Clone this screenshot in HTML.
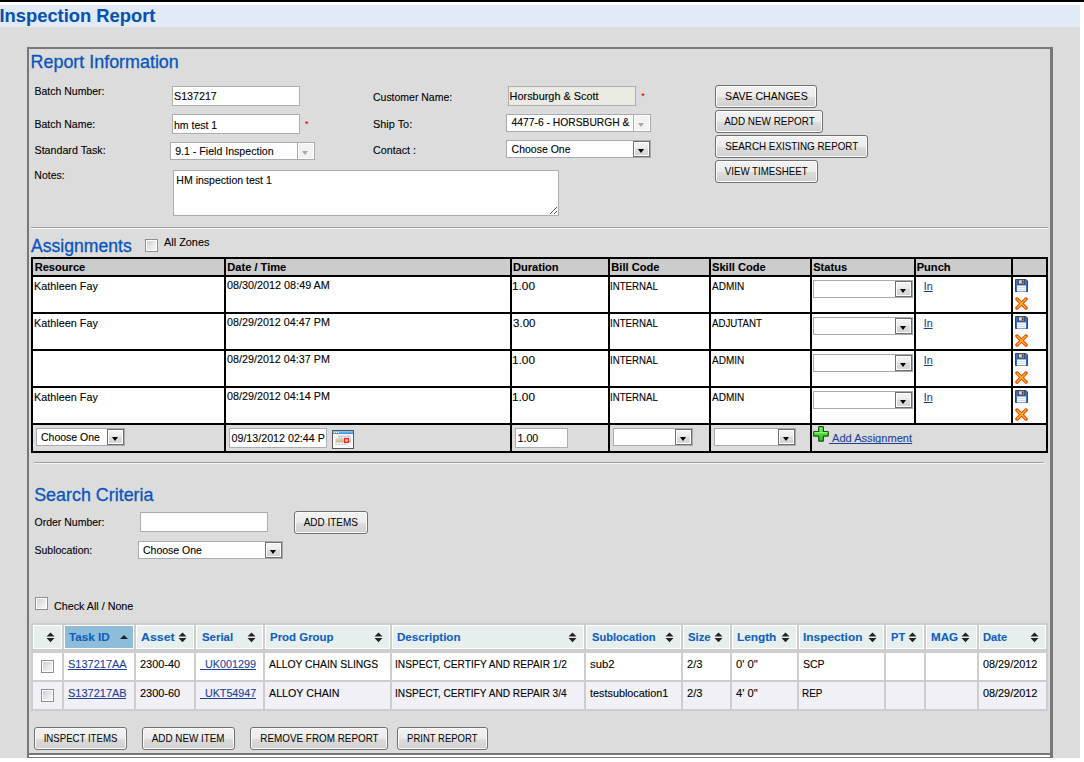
<!DOCTYPE html><html><head><meta charset="utf-8"><style>
html,body{margin:0;padding:0;}
body{width:1084px;height:762px;overflow:hidden;position:relative;background:#fff;font-family:"Liberation Sans",sans-serif;color:#000;}
.a{position:absolute;}
.t{position:absolute;white-space:pre;-webkit-text-stroke:0.1px currentColor;}
.btn{position:absolute;box-sizing:border-box;border:1px solid #707070;border-radius:3px;background:linear-gradient(#f2f2f2 0%,#ebebeb 50%,#dddddd 51%,#cfcfcf 100%);box-shadow:inset 0 0 0 1px #fcfcfc;display:flex;align-items:center;justify-content:center;color:#000;white-space:pre;}
.lnk{color:#1d3f9a;text-decoration:underline;}
.th{position:absolute;white-space:pre;font-weight:bold;}
</style></head><body>
<div class="a" style="left:0px;top:0px;width:1084px;height:2px;background:#000;"></div>
<div class="a" style="left:0px;top:5px;width:1080px;height:22px;background:#e3eaf7;"></div>
<div class="a" style="left:0px;top:27px;width:1080px;height:731px;background:#dcdcdc;"></div>
<div class="t" style="left:-0.50px;top:7.27px;font-size:18.35px;line-height:18.35px;font-weight:bold;color:#0553ac;">Inspection Report</div>
<div class="a" style="left:27px;top:47px;width:1026px;height:711px;border:2px solid #787878;border-right-width:3px;box-sizing:border-box;"></div>
<div class="a" style="left:29px;top:753px;width:1021px;height:2px;background:#787878;"></div>
<div class="a" style="left:29px;top:755px;width:1021px;height:2px;background:#fff;"></div>
<div class="t" style="left:30.60px;top:53.65px;font-size:17.9px;line-height:17.9px;color:#0855bd;-webkit-text-stroke:0.3px #0855bd;">Report Information</div>
<div class="t" style="left:34.50px;top:85.91px;font-size:10.5px;line-height:10.5px;">Batch Number:</div>
<div class="t" style="left:34.50px;top:118.81px;font-size:10.5px;line-height:10.5px;">Batch Name:</div>
<div class="t" style="left:34.50px;top:145.44px;font-size:10.7px;line-height:10.7px;">Standard Task:</div>
<div class="t" style="left:34.30px;top:169.91px;font-size:10.5px;line-height:10.5px;">Notes:</div>
<div class="a" style="left:172px;top:86px;width:128px;height:20px;border:1px solid #abadb3;background:#fff;box-sizing:border-box;"></div>
<div class="t" style="left:174.00px;top:90.84px;font-size:10.7px;line-height:10.7px;">S137217</div>
<div class="a" style="left:172px;top:114px;width:128px;height:20px;border:1px solid #abadb3;background:#fff;box-sizing:border-box;"></div>
<div class="t" style="left:174.00px;top:120.31px;font-size:10.5px;line-height:10.5px;">hm test 1</div>
<div class="t" style="left:305.00px;top:120.38px;font-size:9px;line-height:9px;color:#e00;">*</div>
<div class="a" style="left:170px;top:142px;width:145px;height:18px;border:1px solid #a7abb2;background:#fff;box-sizing:border-box;"></div>
<div class="a" style="left:297px;top:142px;width:18px;height:18px;border:1px solid #a9acb1;box-sizing:border-box;background:#f2f2f2;box-shadow:inset 0 0 0 1px #fff;"></div>
<div class="a" style="left:302.0px;top:150.5px;width:0;height:0;border-left:3.5px solid transparent;border-right:3.5px solid transparent;border-top:4px solid #a8a8a8"></div>
<div class="t" style="left:175.20px;top:145.53px;font-size:10.6px;line-height:10.6px;">9.1 - Field Inspection</div>
<div class="a" style="left:173px;top:170px;width:386px;height:46px;border:1px solid #abadb3;background:#fff;box-sizing:border-box;"></div>
<div class="t" style="left:176.30px;top:175.06px;font-size:10.56px;line-height:10.56px;">HM inspection test 1</div>
<svg class="a" style="left:548px;top:205px" width="10" height="10" fill="#555"><rect x="2" y="8" width="1" height="1"/><rect x="3" y="7" width="1" height="1"/><rect x="4" y="6" width="1" height="1"/><rect x="5" y="5" width="1" height="1"/><rect x="6" y="4" width="1" height="1"/><rect x="7" y="3" width="1" height="1"/><rect x="8" y="2" width="1" height="1"/><rect x="6" y="8" width="1" height="1"/><rect x="7" y="7" width="1" height="1"/><rect x="8" y="6" width="1" height="1"/></svg>
<div class="t" style="left:372.68px;top:91.71px;font-size:10.5px;line-height:10.5px;transform:scaleX(0.9973);transform-origin:0 0;">Customer Name:</div>
<div class="t" style="left:372.66px;top:118.71px;font-size:10.5px;line-height:10.5px;transform:scaleX(1.0380);transform-origin:0 0;">Ship To:</div>
<div class="t" style="left:372.66px;top:144.61px;font-size:10.5px;line-height:10.5px;transform:scaleX(1.0239);transform-origin:0 0;">Contact :</div>
<div class="a" style="left:508px;top:86px;width:128px;height:20px;border:1px solid #abadb3;background:#ebebe4;box-sizing:border-box;"></div>
<div class="t" style="left:509.60px;top:91.17px;font-size:10.9px;line-height:10.9px;">Horsburgh &amp; Scott</div>
<div class="t" style="left:641.30px;top:92.38px;font-size:9px;line-height:9px;color:#e00;">*</div>
<div class="a" style="left:506px;top:114px;width:145px;height:18px;border:1px solid #a7abb2;background:#fff;box-sizing:border-box;"></div>
<div class="a" style="left:633px;top:114px;width:18px;height:18px;border:1px solid #a9acb1;box-sizing:border-box;background:#f2f2f2;box-shadow:inset 0 0 0 1px #fff;"></div>
<div class="a" style="left:638.0px;top:122.5px;width:0;height:0;border-left:3.5px solid transparent;border-right:3.5px solid transparent;border-top:4px solid #a8a8a8"></div>
<div class="t" style="left:511.60px;top:117.88px;font-size:10.3px;line-height:10.3px;">4477-6 - HORSBURGH &amp;</div>
<div class="a" style="left:506px;top:140px;width:145px;height:18px;border:1px solid #a7abb2;background:#fff;box-sizing:border-box;"></div>
<div class="a" style="left:633px;top:141px;width:17px;height:16px;border:1px solid #6f6f6f;box-sizing:border-box;background:linear-gradient(#f4f4f4 0%,#ececec 45%,#dcdcdc 50%,#d4d4d4 100%);box-shadow:inset 0 0 0 1px #fff;"></div>
<div class="a" style="left:637.5px;top:149.0px;width:0;height:0;border-left:3.7px solid transparent;border-right:3.7px solid transparent;border-top:4.2px solid #000"></div>
<div class="t" style="left:511.60px;top:143.61px;font-size:10.5px;line-height:10.5px;">Choose One</div>
<div class="btn" style="left:715px;top:85px;width:102px;height:23px;"><span style="display:inline-block;font-size:10.6px;line-height:12px;transform:scaleX(0.997);margin-top:-1px">SAVE CHANGES</span></div>
<div class="btn" style="left:715px;top:110px;width:108px;height:23px;"><span style="display:inline-block;font-size:10.6px;line-height:12px;transform:scaleX(0.935);margin-top:-1px">ADD NEW REPORT</span></div>
<div class="btn" style="left:715px;top:135px;width:153px;height:23px;"><span style="display:inline-block;font-size:10.6px;line-height:12px;transform:scaleX(0.928);margin-top:-1px">SEARCH EXISTING REPORT</span></div>
<div class="btn" style="left:715px;top:160px;width:103px;height:23px;"><span style="display:inline-block;font-size:10.6px;line-height:12px;transform:scaleX(0.917);margin-top:-1px">VIEW TIMESHEET</span></div>
<div class="a" style="left:31px;top:227px;width:1017px;height:1px;background:#a0a0a0;"></div>
<div class="a" style="left:31px;top:227px;width:1px;height:2px;background:#a0a0a0;"></div>
<div class="a" style="left:31px;top:228px;width:1017px;height:1px;background:#f4f4f4;"></div>
<div class="t" style="left:31.00px;top:237.80px;font-size:17.6px;line-height:17.6px;color:#0855bd;-webkit-text-stroke:0.3px #0855bd;">Assignments</div>
<div class="a" style="left:145px;top:239px;width:13px;height:13px;border:1px solid #8e8f8f;box-sizing:border-box;background:linear-gradient(135deg,#c9ccd2,#eef0f2 70%,#f8f8f8);box-shadow:inset 0 0 0 1px #fff;"></div>
<div class="t" style="left:164.00px;top:236.67px;font-size:10.9px;line-height:10.9px;">All Zones</div>
<div class="a" style="left:31px;top:257px;width:1017px;height:196px;background:#fff;"></div>
<div class="a" style="left:33px;top:259px;width:1013px;height:16px;background:#cccccc;"></div>
<div class="a" style="left:33px;top:425px;width:1013px;height:26px;background:#dcdcdc;"></div>
<div class="a" style="left:31px;top:257px;width:1017px;height:2px;background:#000;"></div>
<div class="a" style="left:31px;top:275px;width:1017px;height:2px;background:#000;"></div>
<div class="a" style="left:31px;top:312px;width:1017px;height:2px;background:#000;"></div>
<div class="a" style="left:31px;top:349px;width:1017px;height:2px;background:#000;"></div>
<div class="a" style="left:31px;top:386px;width:1017px;height:2px;background:#000;"></div>
<div class="a" style="left:31px;top:423px;width:1017px;height:2px;background:#000;"></div>
<div class="a" style="left:31px;top:451px;width:1017px;height:2px;background:#000;"></div>
<div class="a" style="left:31px;top:257px;width:2px;height:196px;background:#000;"></div>
<div class="a" style="left:224px;top:257px;width:2px;height:196px;background:#000;"></div>
<div class="a" style="left:510px;top:257px;width:2px;height:196px;background:#000;"></div>
<div class="a" style="left:608px;top:257px;width:2px;height:196px;background:#000;"></div>
<div class="a" style="left:709px;top:257px;width:2px;height:196px;background:#000;"></div>
<div class="a" style="left:810px;top:257px;width:2px;height:196px;background:#000;"></div>
<div class="a" style="left:1046px;top:257px;width:2px;height:196px;background:#000;"></div>
<div class="a" style="left:914px;top:257px;width:2px;height:168px;background:#000;"></div>
<div class="a" style="left:1011px;top:257px;width:2px;height:168px;background:#000;"></div>
<div class="t" style="left:34.70px;top:262.00px;font-size:11.1px;line-height:11.1px;font-weight:bold;">Resource</div>
<div class="t" style="left:227.30px;top:262.00px;font-size:11.1px;line-height:11.1px;font-weight:bold;">Date / Time</div>
<div class="t" style="left:513.00px;top:262.00px;font-size:11.1px;line-height:11.1px;font-weight:bold;">Duration</div>
<div class="t" style="left:611.30px;top:262.00px;font-size:11.1px;line-height:11.1px;font-weight:bold;">Bill Code</div>
<div class="t" style="left:712.00px;top:262.00px;font-size:11.1px;line-height:11.1px;font-weight:bold;">Skill Code</div>
<div class="t" style="left:813.20px;top:262.00px;font-size:11.1px;line-height:11.1px;font-weight:bold;">Status</div>
<div class="t" style="left:916.70px;top:262.00px;font-size:11.1px;line-height:11.1px;font-weight:bold;">Punch</div>
<div class="t" style="left:33.83px;top:280.86px;font-size:10.8px;line-height:10.8px;transform:scaleX(1.0040);transform-origin:0 0;">Kathleen Fay</div>
<div class="t" style="left:227.07px;top:279.57px;font-size:10.9px;line-height:10.9px;transform:scaleX(0.9927);transform-origin:0 0;">08/30/2012 08:49 AM</div>
<div class="t" style="left:512.06px;top:280.73px;font-size:10.6px;line-height:10.6px;transform:scaleX(1.1135);transform-origin:0 0;">1.00</div>
<div class="t" style="left:610.43px;top:280.73px;font-size:10.6px;line-height:10.6px;transform:scaleX(0.9121);transform-origin:0 0;">INTERNAL</div>
<div class="t" style="left:712.20px;top:280.73px;font-size:10.6px;line-height:10.6px;transform:scaleX(0.9464);transform-origin:0 0;">ADMIN</div>
<div class="a" style="left:813px;top:280px;width:100px;height:18px;border:1px solid #a7abb2;background:#fff;box-sizing:border-box;"></div>
<div class="a" style="left:895px;top:281px;width:17px;height:16px;border:1px solid #6f6f6f;box-sizing:border-box;background:linear-gradient(#f4f4f4 0%,#ececec 45%,#dcdcdc 50%,#d4d4d4 100%);box-shadow:inset 0 0 0 1px #fff;"></div>
<div class="a" style="left:899.5px;top:289.0px;width:0;height:0;border-left:3.7px solid transparent;border-right:3.7px solid transparent;border-top:4.2px solid #000"></div>
<div class="t" style="left:923.70px;top:280.94px;font-size:10.7px;line-height:10.7px;color:#1d3f9a;text-decoration:underline;">In</div>
<svg class="a" style="left:1015px;top:279px" width="13" height="13" viewBox="0 0 13 13">
<path d="M0.5 0.5 H11 L12.5 2 V12.5 H0.5 Z" fill="#3a6fc4" stroke="#1b4b9c"/>
<rect x="3.4" y="0.8" width="6.2" height="4.2" fill="#d8d8d8" stroke="#404040" stroke-width="0.9"/><rect x="6.8" y="1.5" width="1.8" height="2.8" fill="#444"/>
<rect x="2" y="6.5" width="9" height="6" fill="#f7f9fd"/>
<line x1="2.5" y1="8.5" x2="10.5" y2="8.5" stroke="#c5cfe3" stroke-width="0.7"/><line x1="2.5" y1="10.5" x2="10.5" y2="10.5" stroke="#c5cfe3" stroke-width="0.7"/></svg>
<svg class="a" style="left:1015px;top:297px" width="13" height="13" viewBox="0 0 13 13">
<path d="M2 2 L11 11 M11 2 L2 11" stroke="#f24800" stroke-width="3.5" stroke-linecap="round"/>
<path d="M2.3 2.3 L10.7 10.7 M10.7 2.3 L2.3 10.7" stroke="#ffb52a" stroke-width="1.5" stroke-linecap="round"/></svg>
<div class="t" style="left:33.83px;top:317.86px;font-size:10.8px;line-height:10.8px;transform:scaleX(1.0040);transform-origin:0 0;">Kathleen Fay</div>
<div class="t" style="left:227.07px;top:316.57px;font-size:10.9px;line-height:10.9px;transform:scaleX(0.9874);transform-origin:0 0;">08/29/2012 04:47 PM</div>
<div class="t" style="left:512.54px;top:317.73px;font-size:10.6px;line-height:10.6px;transform:scaleX(1.0897);transform-origin:0 0;">3.00</div>
<div class="t" style="left:610.43px;top:317.73px;font-size:10.6px;line-height:10.6px;transform:scaleX(0.9121);transform-origin:0 0;">INTERNAL</div>
<div class="t" style="left:712.20px;top:317.73px;font-size:10.6px;line-height:10.6px;transform:scaleX(0.9158);transform-origin:0 0;">ADJUTANT</div>
<div class="a" style="left:813px;top:317px;width:100px;height:18px;border:1px solid #a7abb2;background:#fff;box-sizing:border-box;"></div>
<div class="a" style="left:895px;top:318px;width:17px;height:16px;border:1px solid #6f6f6f;box-sizing:border-box;background:linear-gradient(#f4f4f4 0%,#ececec 45%,#dcdcdc 50%,#d4d4d4 100%);box-shadow:inset 0 0 0 1px #fff;"></div>
<div class="a" style="left:899.5px;top:326.0px;width:0;height:0;border-left:3.7px solid transparent;border-right:3.7px solid transparent;border-top:4.2px solid #000"></div>
<div class="t" style="left:923.70px;top:317.94px;font-size:10.7px;line-height:10.7px;color:#1d3f9a;text-decoration:underline;">In</div>
<svg class="a" style="left:1015px;top:316px" width="13" height="13" viewBox="0 0 13 13">
<path d="M0.5 0.5 H11 L12.5 2 V12.5 H0.5 Z" fill="#3a6fc4" stroke="#1b4b9c"/>
<rect x="3.4" y="0.8" width="6.2" height="4.2" fill="#d8d8d8" stroke="#404040" stroke-width="0.9"/><rect x="6.8" y="1.5" width="1.8" height="2.8" fill="#444"/>
<rect x="2" y="6.5" width="9" height="6" fill="#f7f9fd"/>
<line x1="2.5" y1="8.5" x2="10.5" y2="8.5" stroke="#c5cfe3" stroke-width="0.7"/><line x1="2.5" y1="10.5" x2="10.5" y2="10.5" stroke="#c5cfe3" stroke-width="0.7"/></svg>
<svg class="a" style="left:1015px;top:334px" width="13" height="13" viewBox="0 0 13 13">
<path d="M2 2 L11 11 M11 2 L2 11" stroke="#f24800" stroke-width="3.5" stroke-linecap="round"/>
<path d="M2.3 2.3 L10.7 10.7 M10.7 2.3 L2.3 10.7" stroke="#ffb52a" stroke-width="1.5" stroke-linecap="round"/></svg>
<div class="t" style="left:227.07px;top:353.57px;font-size:10.9px;line-height:10.9px;transform:scaleX(0.9874);transform-origin:0 0;">08/29/2012 04:37 PM</div>
<div class="t" style="left:512.06px;top:354.73px;font-size:10.6px;line-height:10.6px;transform:scaleX(1.1135);transform-origin:0 0;">1.00</div>
<div class="t" style="left:610.43px;top:354.73px;font-size:10.6px;line-height:10.6px;transform:scaleX(0.9121);transform-origin:0 0;">INTERNAL</div>
<div class="t" style="left:712.20px;top:354.73px;font-size:10.6px;line-height:10.6px;transform:scaleX(0.9464);transform-origin:0 0;">ADMIN</div>
<div class="a" style="left:813px;top:354px;width:100px;height:18px;border:1px solid #a7abb2;background:#fff;box-sizing:border-box;"></div>
<div class="a" style="left:895px;top:355px;width:17px;height:16px;border:1px solid #6f6f6f;box-sizing:border-box;background:linear-gradient(#f4f4f4 0%,#ececec 45%,#dcdcdc 50%,#d4d4d4 100%);box-shadow:inset 0 0 0 1px #fff;"></div>
<div class="a" style="left:899.5px;top:363.0px;width:0;height:0;border-left:3.7px solid transparent;border-right:3.7px solid transparent;border-top:4.2px solid #000"></div>
<div class="t" style="left:923.70px;top:354.94px;font-size:10.7px;line-height:10.7px;color:#1d3f9a;text-decoration:underline;">In</div>
<svg class="a" style="left:1015px;top:353px" width="13" height="13" viewBox="0 0 13 13">
<path d="M0.5 0.5 H11 L12.5 2 V12.5 H0.5 Z" fill="#3a6fc4" stroke="#1b4b9c"/>
<rect x="3.4" y="0.8" width="6.2" height="4.2" fill="#d8d8d8" stroke="#404040" stroke-width="0.9"/><rect x="6.8" y="1.5" width="1.8" height="2.8" fill="#444"/>
<rect x="2" y="6.5" width="9" height="6" fill="#f7f9fd"/>
<line x1="2.5" y1="8.5" x2="10.5" y2="8.5" stroke="#c5cfe3" stroke-width="0.7"/><line x1="2.5" y1="10.5" x2="10.5" y2="10.5" stroke="#c5cfe3" stroke-width="0.7"/></svg>
<svg class="a" style="left:1015px;top:371px" width="13" height="13" viewBox="0 0 13 13">
<path d="M2 2 L11 11 M11 2 L2 11" stroke="#f24800" stroke-width="3.5" stroke-linecap="round"/>
<path d="M2.3 2.3 L10.7 10.7 M10.7 2.3 L2.3 10.7" stroke="#ffb52a" stroke-width="1.5" stroke-linecap="round"/></svg>
<div class="t" style="left:33.83px;top:391.86px;font-size:10.8px;line-height:10.8px;transform:scaleX(1.0040);transform-origin:0 0;">Kathleen Fay</div>
<div class="t" style="left:227.07px;top:390.57px;font-size:10.9px;line-height:10.9px;transform:scaleX(0.9874);transform-origin:0 0;">08/29/2012 04:14 PM</div>
<div class="t" style="left:512.06px;top:391.73px;font-size:10.6px;line-height:10.6px;transform:scaleX(1.1135);transform-origin:0 0;">1.00</div>
<div class="t" style="left:610.43px;top:391.73px;font-size:10.6px;line-height:10.6px;transform:scaleX(0.9121);transform-origin:0 0;">INTERNAL</div>
<div class="t" style="left:712.20px;top:391.73px;font-size:10.6px;line-height:10.6px;transform:scaleX(0.9464);transform-origin:0 0;">ADMIN</div>
<div class="a" style="left:813px;top:391px;width:100px;height:18px;border:1px solid #a7abb2;background:#fff;box-sizing:border-box;"></div>
<div class="a" style="left:895px;top:392px;width:17px;height:16px;border:1px solid #6f6f6f;box-sizing:border-box;background:linear-gradient(#f4f4f4 0%,#ececec 45%,#dcdcdc 50%,#d4d4d4 100%);box-shadow:inset 0 0 0 1px #fff;"></div>
<div class="a" style="left:899.5px;top:400.0px;width:0;height:0;border-left:3.7px solid transparent;border-right:3.7px solid transparent;border-top:4.2px solid #000"></div>
<div class="t" style="left:923.70px;top:391.94px;font-size:10.7px;line-height:10.7px;color:#1d3f9a;text-decoration:underline;">In</div>
<svg class="a" style="left:1015px;top:390px" width="13" height="13" viewBox="0 0 13 13">
<path d="M0.5 0.5 H11 L12.5 2 V12.5 H0.5 Z" fill="#3a6fc4" stroke="#1b4b9c"/>
<rect x="3.4" y="0.8" width="6.2" height="4.2" fill="#d8d8d8" stroke="#404040" stroke-width="0.9"/><rect x="6.8" y="1.5" width="1.8" height="2.8" fill="#444"/>
<rect x="2" y="6.5" width="9" height="6" fill="#f7f9fd"/>
<line x1="2.5" y1="8.5" x2="10.5" y2="8.5" stroke="#c5cfe3" stroke-width="0.7"/><line x1="2.5" y1="10.5" x2="10.5" y2="10.5" stroke="#c5cfe3" stroke-width="0.7"/></svg>
<svg class="a" style="left:1015px;top:408px" width="13" height="13" viewBox="0 0 13 13">
<path d="M2 2 L11 11 M11 2 L2 11" stroke="#f24800" stroke-width="3.5" stroke-linecap="round"/>
<path d="M2.3 2.3 L10.7 10.7 M10.7 2.3 L2.3 10.7" stroke="#ffb52a" stroke-width="1.5" stroke-linecap="round"/></svg>
<div class="a" style="left:36px;top:428px;width:89px;height:18px;border:1px solid #a7abb2;background:#fff;box-sizing:border-box;"></div>
<div class="a" style="left:107px;top:429px;width:17px;height:16px;border:1px solid #6f6f6f;box-sizing:border-box;background:linear-gradient(#f4f4f4 0%,#ececec 45%,#dcdcdc 50%,#d4d4d4 100%);box-shadow:inset 0 0 0 1px #fff;"></div>
<div class="a" style="left:111.5px;top:437.0px;width:0;height:0;border-left:3.7px solid transparent;border-right:3.7px solid transparent;border-top:4.2px solid #000"></div>
<div class="t" style="left:41.00px;top:431.61px;font-size:10.5px;line-height:10.5px;">Choose One</div>
<div class="a" style="left:229px;top:428px;width:98px;height:20px;border:1px solid #abadb3;background:#fff;box-sizing:border-box;"></div>
<div class="t" style="left:231.50px;top:432.94px;font-size:10.7px;line-height:10.7px;">09/13/2012 02:44 P</div>
<svg class="a" style="left:332px;top:430px" width="22" height="19" viewBox="0 0 22 19">
<defs><linearGradient id="cb" x1="0" y1="0" x2="0" y2="1"><stop offset="0" stop-color="#8fd3ff"/><stop offset="1" stop-color="#3d86dc"/></linearGradient>
<linearGradient id="cy" x1="0" y1="0" x2="0" y2="1"><stop offset="0" stop-color="#ffe760"/><stop offset="1" stop-color="#f5a623"/></linearGradient></defs>
<rect x="0.5" y="0.5" width="21" height="18" fill="#fbfbf8" stroke="#555"/>
<rect x="1" y="1" width="20" height="3" fill="url(#cb)"/>
<rect x="2" y="2" width="1" height="1" fill="#fff"/><rect x="4" y="2" width="1" height="1" fill="#fff"/><rect x="6" y="2" width="1" height="1" fill="#fff"/>
<rect x="6.5" y="5.5" width="12" height="4" fill="#c4c4d4"/>
<rect x="3.5" y="8.5" width="15" height="3.5" fill="#c4c4d4"/>
<rect x="3.5" y="11.5" width="12" height="3.5" fill="#c4c4d4"/>
<g fill="#e6f3e6"><rect x="7.5" y="6.5" width="2" height="2"/><rect x="10.5" y="6.5" width="2" height="2"/><rect x="13.5" y="6.5" width="2" height="2"/><rect x="16.5" y="6.5" width="2" height="2"/></g>
<g fill="url(#cy)"><rect x="4.5" y="9.5" width="2" height="2"/><rect x="7.5" y="9.5" width="2" height="2"/><rect x="10.5" y="9.5" width="2" height="2"/><rect x="16.5" y="9.5" width="2" height="2"/></g>
<g fill="#fff"><rect x="4.5" y="12.5" width="2" height="2"/><rect x="7.5" y="12.5" width="2" height="2"/><rect x="10.5" y="12.5" width="2" height="2"/><rect x="13.5" y="12.5" width="2" height="2"/></g>
<rect x="12.6" y="8.6" width="3.8" height="3.8" fill="#fcc" stroke="#f22" stroke-width="1.2"/>
</svg>
<div class="a" style="left:515px;top:428px;width:53px;height:20px;border:1px solid #abadb3;background:#fff;box-sizing:border-box;"></div>
<div class="t" style="left:517.50px;top:432.94px;font-size:10.7px;line-height:10.7px;">1.00</div>
<div class="a" style="left:613px;top:428px;width:80px;height:18px;border:1px solid #a7abb2;background:#fff;box-sizing:border-box;"></div>
<div class="a" style="left:675px;top:429px;width:17px;height:16px;border:1px solid #6f6f6f;box-sizing:border-box;background:linear-gradient(#f4f4f4 0%,#ececec 45%,#dcdcdc 50%,#d4d4d4 100%);box-shadow:inset 0 0 0 1px #fff;"></div>
<div class="a" style="left:679.5px;top:437.0px;width:0;height:0;border-left:3.7px solid transparent;border-right:3.7px solid transparent;border-top:4.2px solid #000"></div>
<div class="a" style="left:714px;top:428px;width:82px;height:18px;border:1px solid #a7abb2;background:#fff;box-sizing:border-box;"></div>
<div class="a" style="left:778px;top:429px;width:17px;height:16px;border:1px solid #6f6f6f;box-sizing:border-box;background:linear-gradient(#f4f4f4 0%,#ececec 45%,#dcdcdc 50%,#d4d4d4 100%);box-shadow:inset 0 0 0 1px #fff;"></div>
<div class="a" style="left:782.5px;top:437.0px;width:0;height:0;border-left:3.7px solid transparent;border-right:3.7px solid transparent;border-top:4.2px solid #000"></div>
<svg class="a" style="left:813px;top:426px" width="16" height="16" viewBox="0 0 16 16">
<defs><linearGradient id="gp" x1="0" y1="0" x2="0" y2="1"><stop offset="0" stop-color="#8af070"/><stop offset="0.45" stop-color="#4fdc3a"/><stop offset="1" stop-color="#2fb82a"/></linearGradient></defs>
<path d="M6.2 0.7 H9.9 Q10.4 0.7 10.4 1.2 V5.5 H14.8 Q15.3 5.5 15.3 6 V9.6 Q15.3 10.1 14.8 10.1 H10.4 V14.7 Q10.4 15.2 9.9 15.2 H6.2 Q5.7 15.2 5.7 14.7 V10.1 H1.2 Q0.7 10.1 0.7 9.6 V6 Q0.7 5.5 1.2 5.5 H5.7 V1.2 Q5.7 0.7 6.2 0.7 Z" fill="url(#gp)" stroke="#0e5e0c" stroke-width="1.2" stroke-linejoin="round"/>
<path d="M1.5 6.7 H14.5" stroke="#c0f8a8" stroke-width="0.9" opacity="0.8"/>
</svg>
<div class="t" style="left:832.00px;top:432.75px;font-size:11.05px;line-height:11.05px;color:#1d3f9a;transform:scaleX(1.0027);transform-origin:0 0;">Add Assignment</div>
<div class="a" style="left:829px;top:443px;width:83px;height:1px;background:#1d3f9a;"></div>
<div class="a" style="left:34px;top:462px;width:1011px;height:1px;background:#a0a0a0;"></div>
<div class="a" style="left:34px;top:462px;width:1px;height:2px;background:#a0a0a0;"></div>
<div class="a" style="left:34px;top:463px;width:1011px;height:1px;background:#f4f4f4;"></div>
<div class="a" style="left:1044px;top:462px;width:1px;height:2px;background:#f4f4f4;"></div>
<div class="t" style="left:34.20px;top:486.55px;font-size:17.9px;line-height:17.9px;color:#0855bd;-webkit-text-stroke:0.3px #0855bd;">Search Criteria</div>
<div class="t" style="left:34.50px;top:516.91px;font-size:10.5px;line-height:10.5px;">Order Number:</div>
<div class="a" style="left:140px;top:512px;width:128px;height:20px;border:1px solid #abadb3;background:#fff;box-sizing:border-box;"></div>
<div class="btn" style="left:294px;top:511px;width:74px;height:23px;"><span style="display:inline-block;font-size:10.6px;line-height:12px;transform:scaleX(0.940);margin-top:-1px">ADD ITEMS</span></div>
<div class="t" style="left:34.50px;top:544.91px;font-size:10.5px;line-height:10.5px;">Sublocation:</div>
<div class="a" style="left:138px;top:541px;width:145px;height:18px;border:1px solid #a7abb2;background:#fff;box-sizing:border-box;"></div>
<div class="a" style="left:265px;top:542px;width:17px;height:16px;border:1px solid #6f6f6f;box-sizing:border-box;background:linear-gradient(#f4f4f4 0%,#ececec 45%,#dcdcdc 50%,#d4d4d4 100%);box-shadow:inset 0 0 0 1px #fff;"></div>
<div class="a" style="left:269.5px;top:550.0px;width:0;height:0;border-left:3.7px solid transparent;border-right:3.7px solid transparent;border-top:4.2px solid #000"></div>
<div class="t" style="left:143.00px;top:544.61px;font-size:10.5px;line-height:10.5px;">Choose One</div>
<div class="a" style="left:35px;top:597px;width:13px;height:13px;border:1px solid #8e8f8f;box-sizing:border-box;background:linear-gradient(135deg,#c9ccd2,#eef0f2 70%,#f8f8f8);box-shadow:inset 0 0 0 1px #fff;"></div>
<div class="t" style="left:53.66px;top:600.71px;font-size:10.5px;line-height:10.5px;transform:scaleX(1.0215);transform-origin:0 0;">Check All / None</div>
<div class="a" style="left:31px;top:623px;width:1017px;height:88px;background:#cdcdcd;"></div>
<div class="a" style="left:33px;top:625px;width:29px;height:24px;background:#e6eeee;border:1px solid #fff;box-sizing:border-box;"></div>
<svg class="a" style="left:46px;top:632px" width="9" height="11" viewBox="0 0 9 11"><path d="M4.5 0.5 L8.5 4.5 H0.5 Z M0.5 6 H8.5 L4.5 10.2 Z" fill="#222"/></svg>
<div class="a" style="left:33px;top:653px;width:29px;height:27px;background:#fff;"></div>
<div class="a" style="left:33px;top:682px;width:29px;height:27px;background:#f0f0f6;"></div>
<div class="a" style="left:64px;top:625px;width:70px;height:24px;background:#8dbdd8;border:1px solid #fff;box-sizing:border-box;"></div>
<div class="t" style="left:69.18px;top:632.42px;font-size:11.2px;line-height:11.2px;font-weight:bold;color:#0f5fc0;transform:scaleX(1.0438);transform-origin:0 0;">Task ID</div>
<div class="a" style="left:120px;top:635px;width:0;height:0;border-left:4px solid transparent;border-right:4px solid transparent;border-bottom:4px solid #222;"></div>
<div class="a" style="left:64px;top:653px;width:70px;height:27px;background:#fff;"></div>
<div class="a" style="left:64px;top:682px;width:70px;height:27px;background:#f0f0f6;"></div>
<div class="a" style="left:136px;top:625px;width:58px;height:24px;background:#e6eeee;border:1px solid #fff;box-sizing:border-box;"></div>
<div class="t" style="left:140.83px;top:632.42px;font-size:11.2px;line-height:11.2px;font-weight:bold;color:#0f5fc0;transform:scaleX(1.1027);transform-origin:0 0;">Asset</div>
<svg class="a" style="left:178px;top:632px" width="9" height="11" viewBox="0 0 9 11"><path d="M4.5 0.5 L8.5 4.5 H0.5 Z M0.5 6 H8.5 L4.5 10.2 Z" fill="#222"/></svg>
<div class="a" style="left:136px;top:653px;width:58px;height:27px;background:#fff;"></div>
<div class="a" style="left:136px;top:682px;width:58px;height:27px;background:#f0f0f6;"></div>
<div class="a" style="left:196px;top:625px;width:67px;height:24px;background:#e6eeee;border:1px solid #fff;box-sizing:border-box;"></div>
<div class="t" style="left:201.86px;top:632.42px;font-size:11.2px;line-height:11.2px;font-weight:bold;color:#0f5fc0;transform:scaleX(1.0189);transform-origin:0 0;">Serial</div>
<svg class="a" style="left:247px;top:632px" width="9" height="11" viewBox="0 0 9 11"><path d="M4.5 0.5 L8.5 4.5 H0.5 Z M0.5 6 H8.5 L4.5 10.2 Z" fill="#222"/></svg>
<div class="a" style="left:196px;top:653px;width:67px;height:27px;background:#fff;"></div>
<div class="a" style="left:196px;top:682px;width:67px;height:27px;background:#f0f0f6;"></div>
<div class="a" style="left:265px;top:625px;width:125px;height:24px;background:#e6eeee;border:1px solid #fff;box-sizing:border-box;"></div>
<div class="t" style="left:269.90px;top:632.42px;font-size:11.2px;line-height:11.2px;font-weight:bold;color:#0f5fc0;transform:scaleX(1.0225);transform-origin:0 0;">Prod Group</div>
<svg class="a" style="left:374px;top:632px" width="9" height="11" viewBox="0 0 9 11"><path d="M4.5 0.5 L8.5 4.5 H0.5 Z M0.5 6 H8.5 L4.5 10.2 Z" fill="#222"/></svg>
<div class="a" style="left:265px;top:653px;width:125px;height:27px;background:#fff;"></div>
<div class="a" style="left:265px;top:682px;width:125px;height:27px;background:#f0f0f6;"></div>
<div class="a" style="left:392px;top:625px;width:192px;height:24px;background:#e6eeee;border:1px solid #fff;box-sizing:border-box;"></div>
<div class="t" style="left:396.89px;top:632.42px;font-size:11.2px;line-height:11.2px;font-weight:bold;color:#0f5fc0;transform:scaleX(1.0309);transform-origin:0 0;">Description</div>
<svg class="a" style="left:568px;top:632px" width="9" height="11" viewBox="0 0 9 11"><path d="M4.5 0.5 L8.5 4.5 H0.5 Z M0.5 6 H8.5 L4.5 10.2 Z" fill="#222"/></svg>
<div class="a" style="left:392px;top:653px;width:192px;height:27px;background:#fff;"></div>
<div class="a" style="left:392px;top:682px;width:192px;height:27px;background:#f0f0f6;"></div>
<div class="a" style="left:586px;top:625px;width:95px;height:24px;background:#e6eeee;border:1px solid #fff;box-sizing:border-box;"></div>
<div class="t" style="left:591.67px;top:632.42px;font-size:11.2px;line-height:11.2px;font-weight:bold;color:#0f5fc0;transform:scaleX(0.9912);transform-origin:0 0;">Sublocation</div>
<svg class="a" style="left:665px;top:632px" width="9" height="11" viewBox="0 0 9 11"><path d="M4.5 0.5 L8.5 4.5 H0.5 Z M0.5 6 H8.5 L4.5 10.2 Z" fill="#222"/></svg>
<div class="a" style="left:586px;top:653px;width:95px;height:27px;background:#fff;"></div>
<div class="a" style="left:586px;top:682px;width:95px;height:27px;background:#f0f0f6;"></div>
<div class="a" style="left:683px;top:625px;width:47px;height:24px;background:#e6eeee;border:1px solid #fff;box-sizing:border-box;"></div>
<div class="t" style="left:688.36px;top:632.42px;font-size:11.2px;line-height:11.2px;font-weight:bold;color:#0f5fc0;transform:scaleX(1.0125);transform-origin:0 0;">Size</div>
<svg class="a" style="left:714px;top:632px" width="9" height="11" viewBox="0 0 9 11"><path d="M4.5 0.5 L8.5 4.5 H0.5 Z M0.5 6 H8.5 L4.5 10.2 Z" fill="#222"/></svg>
<div class="a" style="left:683px;top:653px;width:47px;height:27px;background:#fff;"></div>
<div class="a" style="left:683px;top:682px;width:47px;height:27px;background:#f0f0f6;"></div>
<div class="a" style="left:732px;top:625px;width:65px;height:24px;background:#e6eeee;border:1px solid #fff;box-sizing:border-box;"></div>
<div class="t" style="left:736.77px;top:632.42px;font-size:11.2px;line-height:11.2px;font-weight:bold;color:#0f5fc0;transform:scaleX(1.0547);transform-origin:0 0;">Length</div>
<svg class="a" style="left:781px;top:632px" width="9" height="11" viewBox="0 0 9 11"><path d="M4.5 0.5 L8.5 4.5 H0.5 Z M0.5 6 H8.5 L4.5 10.2 Z" fill="#222"/></svg>
<div class="a" style="left:732px;top:653px;width:65px;height:27px;background:#fff;"></div>
<div class="a" style="left:732px;top:682px;width:65px;height:27px;background:#f0f0f6;"></div>
<div class="a" style="left:799px;top:625px;width:85px;height:24px;background:#e6eeee;border:1px solid #fff;box-sizing:border-box;"></div>
<div class="t" style="left:803.07px;top:632.42px;font-size:11.2px;line-height:11.2px;font-weight:bold;color:#0f5fc0;transform:scaleX(1.0615);transform-origin:0 0;">Inspection</div>
<svg class="a" style="left:868px;top:632px" width="9" height="11" viewBox="0 0 9 11"><path d="M4.5 0.5 L8.5 4.5 H0.5 Z M0.5 6 H8.5 L4.5 10.2 Z" fill="#222"/></svg>
<div class="a" style="left:799px;top:653px;width:85px;height:27px;background:#fff;"></div>
<div class="a" style="left:799px;top:682px;width:85px;height:27px;background:#f0f0f6;"></div>
<div class="a" style="left:886px;top:625px;width:38px;height:24px;background:#e6eeee;border:1px solid #fff;box-sizing:border-box;"></div>
<div class="t" style="left:890.52px;top:632.42px;font-size:11.2px;line-height:11.2px;font-weight:bold;color:#0f5fc0;transform:scaleX(0.9896);transform-origin:0 0;">PT</div>
<svg class="a" style="left:908px;top:632px" width="9" height="11" viewBox="0 0 9 11"><path d="M4.5 0.5 L8.5 4.5 H0.5 Z M0.5 6 H8.5 L4.5 10.2 Z" fill="#222"/></svg>
<div class="a" style="left:886px;top:653px;width:38px;height:27px;background:#fff;"></div>
<div class="a" style="left:886px;top:682px;width:38px;height:27px;background:#f0f0f6;"></div>
<div class="a" style="left:926px;top:625px;width:51px;height:24px;background:#e6eeee;border:1px solid #fff;box-sizing:border-box;"></div>
<div class="t" style="left:930.79px;top:632.42px;font-size:11.2px;line-height:11.2px;font-weight:bold;color:#0f5fc0;transform:scaleX(1.0390);transform-origin:0 0;">MAG</div>
<svg class="a" style="left:961px;top:632px" width="9" height="11" viewBox="0 0 9 11"><path d="M4.5 0.5 L8.5 4.5 H0.5 Z M0.5 6 H8.5 L4.5 10.2 Z" fill="#222"/></svg>
<div class="a" style="left:926px;top:653px;width:51px;height:27px;background:#fff;"></div>
<div class="a" style="left:926px;top:682px;width:51px;height:27px;background:#f0f0f6;"></div>
<div class="a" style="left:979px;top:625px;width:67px;height:24px;background:#e6eeee;border:1px solid #fff;box-sizing:border-box;"></div>
<div class="t" style="left:983.32px;top:632.42px;font-size:11.2px;line-height:11.2px;font-weight:bold;color:#0f5fc0;transform:scaleX(0.9969);transform-origin:0 0;">Date</div>
<svg class="a" style="left:1030px;top:632px" width="9" height="11" viewBox="0 0 9 11"><path d="M4.5 0.5 L8.5 4.5 H0.5 Z M0.5 6 H8.5 L4.5 10.2 Z" fill="#222"/></svg>
<div class="a" style="left:979px;top:653px;width:67px;height:27px;background:#fff;"></div>
<div class="a" style="left:979px;top:682px;width:67px;height:27px;background:#f0f0f6;"></div>
<div class="a" style="left:41px;top:660px;width:13px;height:13px;border:1px solid #8e8f8f;box-sizing:border-box;background:linear-gradient(135deg,#c9ccd2,#eef0f2 70%,#f8f8f8);box-shadow:inset 0 0 0 1px #fff;"></div>
<div class="t" style="left:67.65px;top:658.83px;font-size:10.6px;line-height:10.6px;color:#1d3f9a;transform:scaleX(1.0381);transform-origin:0 0;">S137217AA</div>
<div class="t" style="left:139.65px;top:658.83px;font-size:10.6px;line-height:10.6px;transform:scaleX(1.0330);transform-origin:0 0;">2300-40</div>
<div class="t" style="left:205.43px;top:658.83px;font-size:10.6px;line-height:10.6px;color:#1d3f9a;transform:scaleX(1.0213);transform-origin:0 0;">UK001299</div>
<div class="t" style="left:269.10px;top:658.83px;font-size:10.6px;line-height:10.6px;transform:scaleX(0.9784);transform-origin:0 0;">ALLOY CHAIN SLINGS</div>
<div class="t" style="left:395.29px;top:658.83px;font-size:10.6px;line-height:10.6px;transform:scaleX(0.9574);transform-origin:0 0;">INSPECT, CERTIFY AND REPAIR 1/2</div>
<div class="t" style="left:589.86px;top:658.83px;font-size:10.6px;line-height:10.6px;transform:scaleX(1.0653);transform-origin:0 0;">sub2</div>
<div class="t" style="left:686.75px;top:658.83px;font-size:10.6px;line-height:10.6px;transform:scaleX(1.0450);transform-origin:0 0;">2/3</div>
<div class="t" style="left:736.15px;top:658.83px;font-size:10.6px;line-height:10.6px;transform:scaleX(1.0658);transform-origin:0 0;">0' 0&quot;</div>
<div class="t" style="left:802.57px;top:658.83px;font-size:10.6px;line-height:10.6px;transform:scaleX(0.9918);transform-origin:0 0;">SCP</div>
<div class="t" style="left:983.37px;top:658.83px;font-size:10.6px;line-height:10.6px;transform:scaleX(1.0241);transform-origin:0 0;">08/29/2012</div>
<div class="a" style="left:68px;top:669px;width:58.599999999999994px;height:1px;background:#1d3f9a;"></div>
<div class="a" style="left:200px;top:669px;width:56px;height:1px;background:#1d3f9a;"></div>
<div class="a" style="left:41px;top:689px;width:13px;height:13px;border:1px solid #8e8f8f;box-sizing:border-box;background:linear-gradient(135deg,#c9ccd2,#eef0f2 70%,#f8f8f8);box-shadow:inset 0 0 0 1px #fff;"></div>
<div class="t" style="left:67.65px;top:687.83px;font-size:10.6px;line-height:10.6px;color:#1d3f9a;transform:scaleX(1.0372);transform-origin:0 0;">S137217AB</div>
<div class="t" style="left:139.65px;top:687.83px;font-size:10.6px;line-height:10.6px;transform:scaleX(1.0330);transform-origin:0 0;">2300-60</div>
<div class="t" style="left:205.44px;top:687.83px;font-size:10.6px;line-height:10.6px;color:#1d3f9a;transform:scaleX(1.0103);transform-origin:0 0;">UKT54947</div>
<div class="t" style="left:269.10px;top:687.83px;font-size:10.6px;line-height:10.6px;transform:scaleX(1.0101);transform-origin:0 0;">ALLOY CHAIN</div>
<div class="t" style="left:395.29px;top:687.83px;font-size:10.6px;line-height:10.6px;transform:scaleX(0.9563);transform-origin:0 0;">INSPECT, CERTIFY AND REPAIR 3/4</div>
<div class="t" style="left:589.98px;top:687.83px;font-size:10.6px;line-height:10.6px;transform:scaleX(1.0225);transform-origin:0 0;">testsublocation1</div>
<div class="t" style="left:686.75px;top:687.83px;font-size:10.6px;line-height:10.6px;transform:scaleX(1.0450);transform-origin:0 0;">2/3</div>
<div class="t" style="left:736.38px;top:687.83px;font-size:10.6px;line-height:10.6px;transform:scaleX(1.0544);transform-origin:0 0;">4' 0&quot;</div>
<div class="t" style="left:802.30px;top:687.83px;font-size:10.6px;line-height:10.6px;transform:scaleX(0.9385);transform-origin:0 0;">REP</div>
<div class="t" style="left:983.37px;top:687.83px;font-size:10.6px;line-height:10.6px;transform:scaleX(1.0241);transform-origin:0 0;">08/29/2012</div>
<div class="a" style="left:68px;top:698px;width:58.0px;height:1px;background:#1d3f9a;"></div>
<div class="a" style="left:200px;top:698px;width:56px;height:1px;background:#1d3f9a;"></div>
<div class="btn" style="left:34px;top:727px;width:93px;height:23px;"><span style="display:inline-block;font-size:10.6px;line-height:12px;transform:scaleX(0.909);margin-top:-1px">INSPECT ITEMS</span></div>
<div class="btn" style="left:142px;top:727px;width:93px;height:23px;"><span style="display:inline-block;font-size:10.6px;line-height:12px;transform:scaleX(0.929);margin-top:-1px">ADD NEW ITEM</span></div>
<div class="btn" style="left:250px;top:727px;width:138px;height:23px;"><span style="display:inline-block;font-size:10.6px;line-height:12px;transform:scaleX(0.932);margin-top:-1px">REMOVE FROM REPORT</span></div>
<div class="btn" style="left:397px;top:727px;width:91px;height:23px;"><span style="display:inline-block;font-size:10.6px;line-height:12px;transform:scaleX(0.897);margin-top:-1px">PRINT REPORT</span></div>
</body></html>
